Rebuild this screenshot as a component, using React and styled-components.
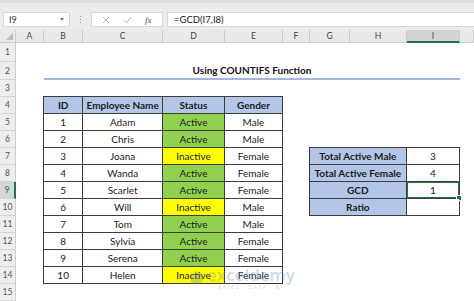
import React from 'react';
import styled, { createGlobalStyle } from 'styled-components';

const GlobalStyle = createGlobalStyle`
  body {
    margin: 0;
    font-family: Lato, "Liberation Sans", sans-serif;
    background: #fff;
  }
`;

const Page = styled.div`
  position: relative;
  width: 474px;
  height: 301px;
  overflow: hidden;
  display: flex;
  flex-direction: column;
  background: #fff;
`;

const TopBar = styled.div`
  height: 30px;
  box-sizing: border-box;
  background: #ececec;
  display: flex;
  align-items: flex-start;
  padding: 9px 0 0 3px;
  border-top: 3px solid #dedede;
`;

const NameBox = styled.div`
  width: 67px;
  height: 15px;
  box-sizing: border-box;
  background: #fff;
  border: 1px solid #d8d8d8;
  display: flex;
  align-items: center;
  justify-content: space-between;
  padding: 0 5px 0 5px;
  font-size: 9px;
  color: #333;
`;

const Caret = styled.span`
  width: 0;
  height: 0;
  border-left: 2.5px solid transparent;
  border-right: 2.5px solid transparent;
  border-top: 3px solid #777;
`;

const Dots = styled.div`
  width: 21px;
  height: 15px;
  display: flex;
  flex-direction: column;
  align-items: center;
  justify-content: center;
  gap: 2px;
  span {
    width: 1px;
    height: 1px;
    background: #9a9a9a;
  }
`;

const IconBox = styled.div`
  width: 72px;
  height: 15px;
  box-sizing: border-box;
  background: #fff;
  border: 1px solid #d8d8d8;
  display: flex;
  align-items: center;
  justify-content: space-around;
  padding: 0 4px;
`;

const Fx = styled.span`
  font-family: "Liberation Serif", serif;
  font-style: italic;
  font-size: 9px;
  color: #555;
`;

const FormulaBox = styled.div`
  flex: 1;
  height: 15px;
  box-sizing: border-box;
  margin-left: 4px;
  background: #fff;
  border: 1px solid #d8d8d8;
  border-right: none;
  display: flex;
  align-items: center;
  padding-left: 6px;
  font-size: 9.5px;
  color: #222;
`;

const Sheet = styled.div`
  flex: 1;
  display: grid;
  grid-template-columns: 16px 28px 39px 80px 62px 58px 27px 40px 57px 53px 1fr;
  grid-template-rows: 13px 19px 18px repeat(13, 17px);
`;

const ColHead = styled.div`
  grid-row: 1;
  grid-column: ${p => p.$col};
  box-sizing: border-box;
  background: ${p => (p.$active ? '#d3d3d3' : '#e9e9e9')};
  border-right: 1px solid #cdcdcd;
  border-bottom: ${p => (p.$active ? '2px solid #217346' : '1px solid #cdcdcd')};
  display: flex;
  align-items: center;
  justify-content: center;
  font-size: 8.5px;
  color: #444;
`;

const Corner = styled(ColHead)`
  position: relative;
  &::after {
    content: '';
    position: absolute;
    right: 2px;
    bottom: 2px;
    border-left: 7px solid transparent;
    border-bottom: 7px solid #bcbcbc;
  }
`;

const RowHead = styled.div`
  grid-column: 1;
  grid-row: ${p => p.$row};
  box-sizing: border-box;
  background: ${p => (p.$active ? '#d6d6d6' : '#eeeeee')};
  border-bottom: 1px solid #d4d4d4;
  border-right: ${p => (p.$active ? '2px solid #217346' : '1px solid #cdcdcd')};
  display: flex;
  align-items: center;
  justify-content: center;
  font-size: 8.5px;
  color: ${p => (p.$active ? '#217346' : '#555')};
`;

const Title = styled.div`
  grid-row: 3;
  grid-column: 3 / 11;
  box-sizing: border-box;
  border-bottom: 2px solid #a4b6de;
  display: flex;
  align-items: center;
  justify-content: center;
  padding-bottom: 1px;
  font-size: 10px;
  font-weight: 700;
  color: #111;
`;

const DataTable = styled.div`
  grid-row: ${p => p.$rows};
  grid-column: ${p => p.$cols};
  margin: -1px 0 0 -1px;
  display: grid;
  grid-template-columns: ${p => p.$template};
  grid-auto-rows: 1fr;
  gap: 1px;
  padding: 1px;
  background: #3c3c3c;
`;

const fills = {
  head: '#b4c6e7',
  Active: '#92d050',
  Inactive: '#ffff00',
  plain: '#ffffff',
};

const Cell = styled.div`
  position: relative;
  background: ${p => fills[p.$fill || 'plain']};
  display: flex;
  align-items: center;
  justify-content: center;
  font-size: 10px;
  font-weight: ${p => (p.$bold ? 700 : 400)};
  color: #1b1b1b;
  ${p =>
    p.$selected &&
    `
    outline: 1.5px solid #217346;
    outline-offset: -1px;
    &::after {
      content: '';
      position: absolute;
      right: -3px;
      bottom: -3px;
      width: 4px;
      height: 4px;
      background: #217346;
      border: 1px solid #fff;
    }
  `}
`;

const Watermark = styled.div`
  position: absolute;
  left: 190px;
  top: 266px;
  display: flex;
  align-items: center;
  gap: 3px;
  opacity: 0.3;
  pointer-events: none;
`;

const MarkText = styled.div`
  display: flex;
  flex-direction: column;
  align-items: center;
  line-height: 1;
  color: #5d84b8;
  font-family: "Open Sans", sans-serif;
  font-size: 17px;
  font-weight: 600;
  small {
    font-size: 5px;
    letter-spacing: 1.5px;
    margin-top: 2px;
    font-weight: 400;
  }
`;

const columns = ['A', 'B', 'C', 'D', 'E', 'F', 'G', 'H', 'I'];

const employees = [
  [1, 'Adam', 'Active', 'Male'],
  [2, 'Chris', 'Active', 'Male'],
  [3, 'Joana', 'Inactive', 'Female'],
  [4, 'Wanda', 'Active', 'Female'],
  [5, 'Scarlet', 'Active', 'Female'],
  [6, 'Will', 'Inactive', 'Male'],
  [7, 'Tom', 'Active', 'Male'],
  [8, 'Sylvia', 'Active', 'Female'],
  [9, 'Serena', 'Active', 'Female'],
  [10, 'Helen', 'Inactive', 'Female'],
];

const summary = [
  ['Total Active Male', '3'],
  ['Total Active Female', '4'],
  ['GCD', '1'],
  ['Ratio', ''],
];

const App = () => {
  return (
    <Page>
      <GlobalStyle />
      <TopBar>
        <NameBox>
          I9
          <Caret />
        </NameBox>
        <Dots>
          <span />
          <span />
          <span />
        </Dots>
        <IconBox>
          <svg width="8" height="8" viewBox="0 0 8 8">
            <path d="M1 1 L7 7 M7 1 L1 7" stroke="#b5b5b5" strokeWidth="1" />
          </svg>
          <svg width="9" height="8" viewBox="0 0 9 8">
            <path d="M1 4.5 L3.5 7 L8 1" stroke="#b5b5b5" strokeWidth="1" fill="none" />
          </svg>
          <Fx>fx</Fx>
        </IconBox>
        <FormulaBox>=GCD(I7,I8)</FormulaBox>
      </TopBar>

      <Sheet>
        <Corner $col={1} />
        {columns.map((c, i) => (
          <ColHead key={c} $col={i + 2} $active={c === 'I'}>
            {c}
          </ColHead>
        ))}
        <ColHead $col={11} />

        {Array.from({ length: 15 }, (_, i) => (
          <RowHead key={i} $row={i + 2} $active={i + 1 === 9}>
            {i + 1}
          </RowHead>
        ))}

        <Title>Using COUNTIFS Function</Title>

        <DataTable $rows="5 / 16" $cols="3 / 7" $template="39fr 80fr 62fr 58fr">
          {['ID', 'Employee Name', 'Status', 'Gender'].map(h => (
            <Cell key={h} $fill="head" $bold>
              {h}
            </Cell>
          ))}
          {employees.map(([id, name, status, gender]) => (
            <React.Fragment key={id}>
              <Cell>{id}</Cell>
              <Cell>{name}</Cell>
              <Cell $fill={status}>{status}</Cell>
              <Cell>{gender}</Cell>
            </React.Fragment>
          ))}
        </DataTable>

        <DataTable $rows="8 / 12" $cols="8 / 11" $template="97fr 53fr">
          {summary.map(([label, value]) => (
            <React.Fragment key={label}>
              <Cell $fill="head" $bold>
                {label}
              </Cell>
              <Cell $selected={label === 'GCD'}>{value}</Cell>
            </React.Fragment>
          ))}
        </DataTable>
      </Sheet>

      <Watermark>
        <svg width="14" height="16" viewBox="0 0 14 16">
          <path d="M7 1 L13 4.5 L13 11.5 L7 15 L1 11.5 L1 4.5 Z" fill="#5d84b8" />
        </svg>
        <MarkText>
          exceldemy
          <small>EXCEL · DATA · BI</small>
        </MarkText>
      </Watermark>
    </Page>
  );
};

export default App;
